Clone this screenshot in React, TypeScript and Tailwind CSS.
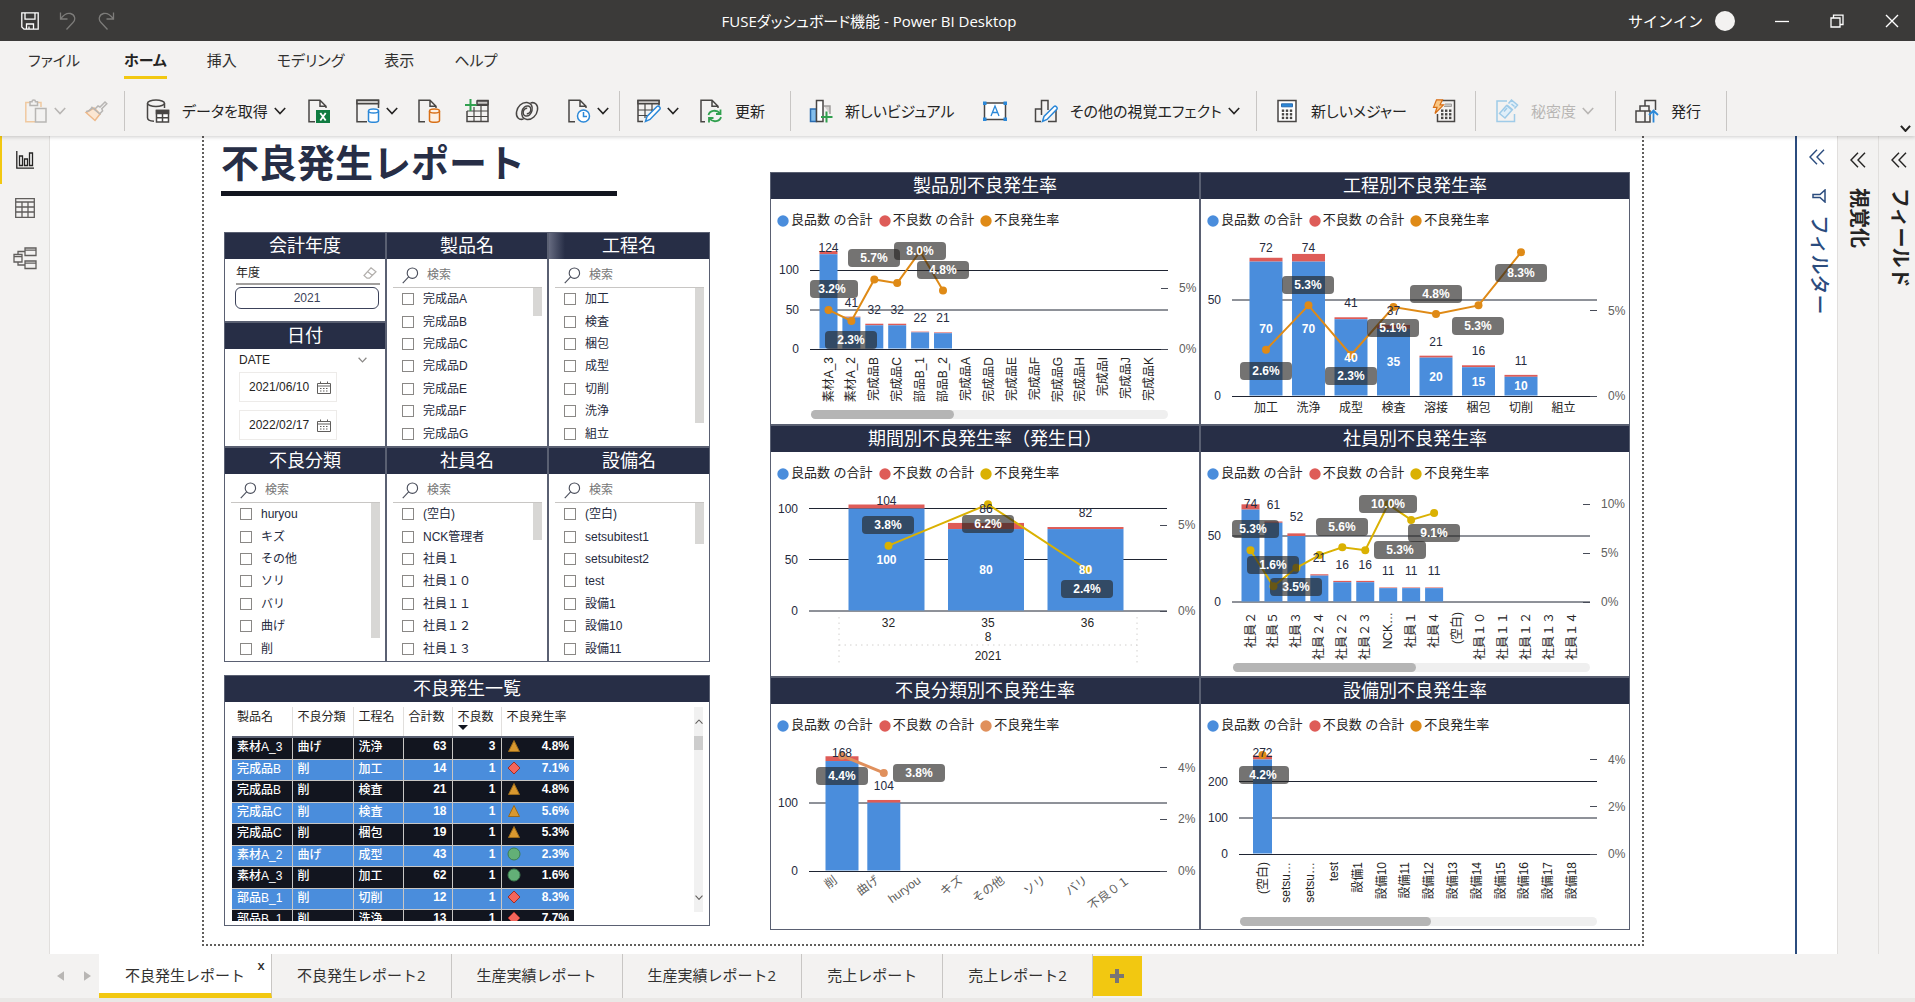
import React from 'react';

const BLUE = '#4a8ddc';
const RED = '#de5c58';
const ORANGE = '#df8a16';
const YELLOW = '#dab102';
const PEACH = '#e0905c';

/* ---------- icons ---------- */

const Icon = ({ children, className = 'h-6 w-6' }: any) => (
  <svg viewBox="0 0 24 24" fill="none" stroke="#484644" strokeWidth="1.5" className={`shrink-0 ${className}`} aria-hidden="true">
    {children}
  </svg>
);

const Chevron = ({ className = 'w-3 text-[#252423]' }: any) => (
  <svg viewBox="0 0 12 8" fill="none" stroke="currentColor" strokeWidth="1.6" className={`shrink-0 ${className}`} aria-hidden="true">
    <path d="M0.8 1l5.2 5.6L11.2 1" />
  </svg>
);

const DoubleChevron = ({ className }: any) => (
  <svg viewBox="0 0 16 16" fill="none" stroke="currentColor" strokeWidth="1.4" className={`h-4 w-4 shrink-0 ${className}`} aria-hidden="true">
    <path d="M8 0.8L1 8l7 7.2M15 0.8L8 8l7 7.2" />
  </svg>
);

const PasteIcon = () => (
  <Icon>
    <path d="M6 3.5H1.8v19.2H11M17 8V3.5h-4" stroke="#f0c9a0" />
    <path d="M6 2.8h2C8 .5 11.500.5 11.500 2.800h2V6.500H6z" stroke="#b8b6b4" />
    <path d="M11.500 9.500h10.500v13.500H11.500z" stroke="#b8b6b4" />
  </Icon>
);

const BrushIcon = () => (
  <Icon>
    <path d="M2 13.500l9 8 5-6.500-6-6z" stroke="#eeb98a" fill="#fbe6d2" />
    <path d="M2 12.500c3 0 4.500-1.500 6-4l8.500 7" stroke="#b8b6b4" />
    <path d="M11 10l3-3 2 1 5-5 1.800 1.800-5 5 .8 2-2.800 3" stroke="#b8b6b4" />
  </Icon>
);

const DatabaseIcon = () => (
  <Icon>
    <ellipse cx="10" cy="4.200" rx="8.500" ry="3.200" />
    <path d="M1.500 4.200v14.500c0 2 3 3.300 6.500 3.600M18.500 4.200V9" />
    <path d="M10.500 11.500h12v11.500h-12z" fill="#fff" />
    <path d="M10.500 11.500h12v3h-12z" fill="#484644" />
    <path d="M16.500 14v9M10.500 18.700h12" />
  </Icon>
);

const DocPage = ({ stroke = '#484644' }: any) => (
  <path d="M8 22.700H2V1.200h11l6 6V9M13 1.200v6h6" stroke={stroke} fill="none" />
);

const ExcelIcon = () => (
  <Icon>
    <DocPage />
    <path d="M9 11h14v13H9z" fill="#107c41" stroke="none" />
    <path d="M13.300 14l5.400 7.500M18.700 14l-5.400 7.500" stroke="#fff" strokeWidth="1.800" />
  </Icon>
);

const Cylinder = ({ color, fill }: any) => (
  <g stroke={color} fill={fill}>
    <path d="M12.500 12v9.500c0 1 2.200 1.800 5 1.800s5-.8 5-1.800V12" />
    <ellipse cx="17.500" cy="12" rx="5" ry="2" />
  </g>
);

const DatasetIcon = () => (
  <Icon>
    <path d="M11 22.700H1V1.200h21.500V9" />
    <path d="M1 1.200h21.500v3.600H1z" fill="#c8c6c4" />
    <Cylinder color="#2b88d8" fill="#fff" />
  </Icon>
);

const SqlIcon = () => (
  <Icon>
    <DocPage />
    <Cylinder color="#d86f16" fill="#fdf0e2" />
  </Icon>
);

const EnterDataIcon = () => (
  <Icon>
    <path d="M12 1.500h11v21H2V12" />
    <path d="M12 2h11v3.500H12z" fill="#c8c6c4" />
    <path d="M2 12h21M2 17.500h21M9 8v14.500M16 5v17.500M10 6.500h13" strokeWidth="1.200" />
    <path d="M5.500 0v12M0 6h11.500" stroke="#31a04f" strokeWidth="2" />
  </Icon>
);

const DataverseIcon = () => (
  <Icon>
    <path d="M8.500 20C4 21.500.8 18 1.500 13 2.200 7.500 7 3 12 3.500c4.200.4 6 4 5 8-.9 3.700-3.600 6-6.300 5.500-2.200-.4-3-2.700-2.300-5 .6-1.900 2.300-3 3.800-2.500" />
    <path d="M15.500 4C20 2.500 23.200 6 22.500 11 21.800 16.500 17 21 12 20.500c-4.200-.4-6-4-5-8 .9-3.700 3.600-6 6.300-5.500 2.200.4 3 2.700 2.300 5-.6 1.900-2.300 3-3.800 2.500" />
  </Icon>
);

const RecentIcon = () => (
  <Icon>
    <DocPage />
    <circle cx="16.500" cy="17" r="6" stroke="#2b88d8" fill="#fff" />
    <path d="M16.500 13v4.500h3.500" stroke="#2b88d8" />
  </Icon>
);

const Pencil = () => (
  <path d="M8.500 22.500l1.500-5L20 7.500c1.500-1.200 4 1 2.800 2.700L13 20.500z" stroke="#2b88d8" fill="#fff" />
);

const TransformIcon = () => (
  <Icon>
    <path d="M6 22.500H1v-21h21v5" />
    <path d="M1 1.500h21v3.300H1z" fill="#c8c6c4" />
    <path d="M1 11h15M1 16.500h10M8 5v14M15 5v7" strokeWidth="1.200" />
    <Pencil />
  </Icon>
);

const RefreshIcon = () => (
  <Icon>
    <path d="M6 22.700H2V1.200h11l6 6V9M13 1.200v6h6" />
    <path d="M9.500 16c1-4.500 8-6 11.500-1.500M21.500 10.500v4.500H17M22 18c-1 4.500-8 6-11.500 1.500M10 23.500V19h4.500" stroke="#31a04f" strokeWidth="1.800" />
  </Icon>
);

const NewVisualIcon = () => (
  <Icon>
    <path d="M1.500 10h6v12.500h-6z" fill="#83beec" stroke="#2b6cb0" />
    <path d="M15 7h6v8" stroke="#a19f9d" fill="#d2d0ce" />
    <path d="M7.500 1.500h6.500v21H7.500z" fill="#fff" />
    <path d="M17.500 12.500v11M12 18h11.500" stroke="#31a04f" strokeWidth="2" />
  </Icon>
);

const TextBoxIcon = () => (
  <Icon>
    <path d="M1.500 4h21v16.500h-21z" fill="#fff" />
    <path d="M8 17l4-10 4 10M9.500 13.500h5" stroke="#2b88d8" strokeWidth="1.300" />
    <path d="M0 2.500h3.500V6H0zM20.500 2.500H24V6h-3.500zM0 18.500h3.500V22H0zM20.500 18.500H24V22h-3.500z" fill="#2b88d8" stroke="none" />
  </Icon>
);

const MoreVisualsIcon = () => (
  <Icon>
    <path d="M7 22.500H1.500V10H7M7.500 16V1.500H14V11M19 10h3v12.500h-8" />
    <Pencil />
  </Icon>
);

const Dots = ({ x, y }: any) => (
  <g fill="#484644" stroke="none">
    {[0, 1, 2].map((r) =>
      [0, 1, 2].map((c) => <rect key={`${r}${c}`} x={x + c * 4} y={y + r * 3.6} width="2.4" height="2.4" />)
    )}
  </g>
);

const MeasureIcon = () => (
  <Icon>
    <path d="M3 1.500h18v21H3z" fill="#fff" />
    <path d="M6.500 4.800h11v3h-11z" fill="#2b88d8" stroke="#2b6cb0" strokeWidth="1" />
    <Dots x={6.800} y={10.500} />
  </Icon>
);

const QuickMeasureIcon = () => (
  <Icon>
    <path d="M10 1.500h12.500v21H5.500V15" />
    <path d="M13 5h6.500v2.500H12" fill="#c8c6c4" stroke="#a19f9d" strokeWidth="1" />
    <Dots x={9} y={10.500} />
    <path d="M4.500.8h6L8 5.800h3.500L3 14.500l2-6.200H1.500z" fill="#f9c784" stroke="#d86f16" strokeWidth="1.200" />
  </Icon>
);

const SensitivityIcon = () => (
  <Icon>
    <g stroke="#9fcbe8">
      <path d="M12 2H2v20.500h17.500V15" />
      <path d="M4.500 14.500l7-8 5.500 4.500-7 8zM9 12.500l3-3.500M13.500 4.500l3-3.500 6 5-3 3.500M16.500 5l3 2.500M12 6l6 5" fill="#e0eff9" />
    </g>
  </Icon>
);

const PublishIcon = () => (
  <Icon>
    <path d="M1 12h9v11H1zM5 12V7h9v5M10 7V1.500h10.500V10M10 12h5v11h-5M20.500 8v3" />
    <path d="M18.500 23.500V12M14 16l4.500-4.500L23 16" stroke="#2b88d8" strokeWidth="1.800" />
  </Icon>
);

const SearchIcon = () => (
  <svg viewBox="0 0 18 18" fill="none" stroke="#4b4f5c" strokeWidth="1.200" className="h-[17px] w-[17px] shrink-0" aria-hidden="true">
    <circle cx="11" cy="6.500" r="5.500" />
    <path d="M7 10.500L0.800 17" />
  </svg>
);

const CalendarIcon = () => (
  <svg viewBox="0 0 14 13" fill="none" stroke="#605e5c" strokeWidth="1" className="h-[13px] w-[14px] shrink-0" aria-hidden="true">
    <path d="M.5 2.500h13v10H.5zM.5 5h13M3.500.5v2.500M10.500.5v2.500" />
    <path d="M3 7.500h8.500M3 10h8.500" strokeDasharray="1.500 1.500" />
  </svg>
);

/* ---------- header ---------- */

const TitleBar = () => (
  <div className="relative flex h-[41px] items-center bg-[#3b3a39] text-white">
    <div className="flex flex-1 items-center gap-5 pl-[21px]">
      <button aria-label="保存">
        <svg viewBox="0 0 18 18" fill="none" stroke="#fff" strokeWidth="1.300" className="h-[18px] w-[18px]">
          <path d="M.8.8h16.400v16.400H3L.8 15zM4 .8v6.400h10V.8M5.500 17v-5h7v5M8 14.500V17" />
        </svg>
      </button>
      <button aria-label="元に戻す">
        <svg viewBox="0 0 18 18" fill="none" stroke="#7d7c7a" strokeWidth="1.300" className="h-[18px] w-[18px]">
          <path d="M1.500.5v6.500h7M1.500 7c3-4 6-6.500 10-5.500 4.500 1.200 5.500 6 2.500 9L7.500 17.500" />
        </svg>
      </button>
      <button aria-label="やり直し">
        <svg viewBox="0 0 18 18" fill="none" stroke="#7d7c7a" strokeWidth="1.300" className="h-[18px] w-[18px]">
          <path d="M16.500.5v6.500h-7M16.500 7c-3-4-6-6.500-10-5.500C2 2.700 1 7.500 4 10.500l6.500 7" />
        </svg>
      </button>
    </div>
    <h1 className="pr-[198px] text-[15px] leading-5 [font-feature-settings:'palt']">FUSEダッシュボード機能 - Power BI Desktop</h1>
    <div className="flex flex-1 items-center justify-end">
      <button className="text-[15px] leading-5">サインイン</button>
      <span className="ml-3 h-5 w-5 rounded-full bg-[#f3f2f1]" />
      <button aria-label="最小化" className="ml-10">
        <svg viewBox="0 0 14 14" stroke="#fff" strokeWidth="1.300" className="h-[14px] w-[14px]"><path d="M0 7.500h14" /></svg>
      </button>
      <button aria-label="元のサイズに戻す" className="ml-[41px]">
        <svg viewBox="0 0 14 14" fill="none" stroke="#fff" strokeWidth="1.300" className="h-[14px] w-[14px]">
          <path d="M1 4h9v9H1zM3.500 4V1.200H13V10.500h-3" />
        </svg>
      </button>
      <button aria-label="閉じる" className="mr-4 ml-[41px]">
        <svg viewBox="0 0 14 14" stroke="#fff" strokeWidth="1.400" className="h-[14px] w-[14px]"><path d="M1 1l12 12M13 1L1 13" /></svg>
      </button>
    </div>
  </div>
);

const menuItems = ['ファイル', 'ホーム', '挿入', 'モデリング', '表示', 'ヘルプ'];

const MenuTabs = () => (
  <nav className="flex h-[38px] items-stretch gap-10 pl-7 text-[15px] leading-5 text-[#323130] [font-feature-settings:'palt']">
    {menuItems.map((item) => (
      <button
        key={item}
        className={
          item === 'ホーム'
            ? 'ml-1 border-b-[3px] border-[#f2c811] pt-[3px] font-bold text-[#252423]'
            : 'border-b-[3px] border-transparent pt-[3px]'
        }
      >
        {item}
      </button>
    ))}
  </nav>
);

const Tool = ({ icon, label, name, menu, off, width }: any) => (
  <button aria-label={label ? undefined : name} className={`flex items-center ${width} ${off ? 'text-[#b8b6b4]' : 'text-[#252423]'}`}>
    {icon}
    {label && <span className="ml-3 whitespace-nowrap">{label}</span>}
    {menu && <Chevron className="ml-[6px] w-3" />}
  </button>
);

const Ribbon = () => (
  <div className="flex h-[57px] items-center pt-[6px] text-[15px] leading-5 [font-feature-settings:'palt']">
    <div className="flex h-10 border-r border-[#c8c6c4] pl-6">
      <Tool icon={<PasteIcon />} name="貼り付け" menu off width="w-[60px]" />
      <Tool icon={<BrushIcon />} name="書式のコピー" off width="w-10" />
    </div>
    <div className="flex h-10 border-r border-[#c8c6c4] pl-[21px]">
      <Tool icon={<DatabaseIcon />} label="データを取得" menu width="w-[161px]" />
      <Tool icon={<ExcelIcon />} name="Excel" width="w-[49px]" />
      <Tool icon={<DatasetIcon />} name="データセット" menu width="w-[61px]" />
      <Tool icon={<SqlIcon />} name="SQL Server" width="w-12" />
      <Tool icon={<EnterDataIcon />} name="データの入力" width="w-[50px]" />
      <Tool icon={<DataverseIcon />} name="Dataverse" width="w-[52px]" />
      <Tool icon={<RecentIcon />} name="最近のソース" menu width="w-[52px]" />
    </div>
    <div className="flex h-10 border-r border-[#c8c6c4] pl-[17px]">
      <Tool icon={<TransformIcon />} name="データの変換" menu width="w-[62px]" />
      <Tool icon={<RefreshIcon />} label="更新" width="w-[91px]" />
    </div>
    <div className="flex h-10 border-r border-[#c8c6c4] pl-[18px]">
      <Tool icon={<NewVisualIcon />} label="新しいビジュアル" width="w-[174px]" />
      <Tool icon={<TextBoxIcon />} name="テキスト ボックス" width="w-[51px]" />
      <Tool icon={<MoreVisualsIcon />} label="その他の視覚エフェクト" menu width="w-[222px]" />
    </div>
    <div className="flex h-10 border-r border-[#c8c6c4] pl-[18px]">
      <Tool icon={<MeasureIcon />} label="新しいメジャー" width="w-[157px]" />
      <Tool icon={<QuickMeasureIcon />} name="クイック メジャー" width="w-[43px]" />
    </div>
    <div className="flex h-10 border-r border-[#c8c6c4] pl-[19px]">
      <Tool icon={<SensitivityIcon />} label="秘密度" menu off width="w-[120px]" />
    </div>
    <div className="flex h-10 border-r border-[#c8c6c4] pl-[19px]">
      <Tool icon={<PublishIcon />} label="発行" width="w-[91px]" />
    </div>
    <button aria-label="リボンを折りたたむ" className="mr-1 mb-1 ml-auto self-end">
      <svg viewBox="0 0 12 8" fill="none" stroke="#252423" strokeWidth="2.200" className="w-[11px]"><path d="M1 1l5 5.500L11 1" /></svg>
    </button>
  </div>
);

/* ---------- side rails ---------- */

const LeftRail = () => (
  <div className="flex w-[50px] shrink-0 flex-col border-r border-[#e1dfdd] bg-[#f3f2f1]">
    <button aria-label="レポート" className="flex h-12 items-center border-l-2 border-[#f2c811] pl-[14px]">
      <svg viewBox="0 0 18 18" fill="none" stroke="#252423" strokeWidth="1.300" className="h-[18px] w-[18px]">
        <path d="M.8 0v17.200H18M3.500 5h3v9.500h-3zM8.500 8h3v6.500h-3zM13.500 2h3v12.500h-3z" />
      </svg>
    </button>
    <button aria-label="データ" className="flex h-12 items-center pl-[15px]">
      <svg viewBox="0 0 20 20" fill="none" stroke="#605e5c" strokeWidth="1.300" className="h-5 w-5">
        <path d="M.7.7h18.600v18.600H.7zM.7 4h18.600M.7 9h18.600M.7 14h18.600M7 4v15M13 4v15" />
      </svg>
    </button>
    <button aria-label="モデル" className="flex h-[52px] items-center pl-[13px]">
      <svg viewBox="0 0 24 24" fill="none" stroke="#605e5c" strokeWidth="1.300" className="h-6 w-6">
        <path d="M12 2h11v7.500H12zM12 4.200h11M1 8.500h8v7.500H1zM1 10.700h8M12 15h11v7.500H12zM12 17.200h11M5 8.500V5.500h7M5 16v3h7" />
      </svg>
    </button>
  </div>
);

const RightPanes = () => (
  <div className="flex shrink-0 text-[20px] leading-6">
    <div className="flex w-[42px] flex-col items-center border-l-2 border-[#2b4c7e] bg-white pt-[13px] text-[#2b4c7e]">
      <DoubleChevron className="" />
      <svg viewBox="0 0 14 14" fill="none" stroke="currentColor" strokeWidth="1.500" className="mt-6 ml-1 h-[14px] w-[14px]" aria-hidden="true">
        <path d="M13 1v12L8 8.500H1V5.500h7z" />
      </svg>
      <span className="mt-3 ml-1 font-medium [text-orientation:sideways] [writing-mode:vertical-rl]">フィルター</span>
    </div>
    <div className="flex w-[41px] flex-col items-center border-l border-[#e1dfdd] bg-[#f3f2f1] pt-4 text-[#252423]">
      <DoubleChevron className="" />
      <span className="mt-5 ml-[2px] font-bold [text-orientation:sideways] [writing-mode:vertical-rl]">視覚化</span>
    </div>
    <div className="flex w-[37px] flex-col items-center border-l border-[#e1dfdd] bg-[#f3f2f1] pt-4 text-[#252423]">
      <DoubleChevron className="ml-1" />
      <span className="mt-5 ml-[6px] font-bold [text-orientation:sideways] [writing-mode:vertical-rl]">フィールド</span>
    </div>
  </div>
);

/* ---------- slicers ---------- */

const PanelTitle = ({ children, className = '' }: any) => (
  <h2 className={`h-[26px] shrink-0 bg-[#272e46] text-center text-[18px] leading-[26px] text-white ${className}`}>{children}</h2>
);

const Slicer = ({ title, items, thumb, titleClass }: any) => (
  <section className="flex flex-col border border-[#5a6072]">
    <PanelTitle className={titleClass}>{title}</PanelTitle>
    <label className="mr-[5px] ml-1.5 flex h-[29px] shrink-0 items-center border-b border-[#c8c6c4] pt-1 pl-[9px]">
      <SearchIcon />
      <input type="text" placeholder="検索" aria-label={`${title} 検索`} className="ml-2 w-full min-w-0 text-[12px] leading-4 outline-none placeholder:text-[#767676]" />
    </label>
    <div className="mr-[5px] flex flex-1 pb-px">
      <ul className="flex flex-1 flex-col pl-[15px]">
        {items.map((item: string) => (
          <li key={item} className="flex flex-1 items-center">
            <label className="flex items-center text-[12px] leading-4 text-[#252a3d]">
              <input type="checkbox" className="mr-[9px] h-3 w-3 appearance-none border border-[#8a8886] bg-white" />
              {item}
            </label>
          </li>
        ))}
      </ul>
      <div className={`w-[9px] bg-[#d8d7d5] ${thumb}`} />
    </div>
  </section>
);

const DateField = ({ value, label }: any) => (
  <label className="flex h-[30px] w-[98px] items-center border border-[#edebe9] pl-[9px]">
    <input type="text" defaultValue={value} aria-label={label} className="w-[68px] text-[12px] leading-4 text-[#252423] outline-none" />
    <CalendarIcon />
  </label>
);

const PeriodSlicers = () => (
  <div className="flex flex-col">
    <section className="flex h-[90px] flex-col border border-[#5a6072]">
      <PanelTitle>会計年度</PanelTitle>
      <div className="mr-[5px] ml-[11px] flex h-[26px] items-center justify-between border-b-2 border-[#a19f9d] pt-[3px] pr-[3px] text-[12px] leading-4">
        <span>年度</span>
        <svg viewBox="0 0 14 12" fill="none" stroke="#b3b0ad" strokeWidth="1.200" className="h-3 w-[14px]" aria-hidden="true">
          <path d="M8 .8l5 4-6.500 6.400H4L1 8.500zM4.500 4.500l5 4" />
        </svg>
      </div>
      <button className="mt-[2px] mr-[6px] ml-[10px] h-[22px] rounded-md border border-[#3c425a] text-[12px] leading-4 text-[#3c425a]">2021</button>
    </section>
    <section className="flex flex-1 flex-col border border-[#5a6072]">
      <PanelTitle>日付</PanelTitle>
      <div className="px-[14px] pt-[3px]">
        <div className="flex h-4 items-center justify-between pr-1 text-[12px] leading-4">
          <span>DATE</span>
          <Chevron className="w-[9px] text-[#8a8886]" />
        </div>
        <div className="mt-1 flex flex-col gap-2">
          <DateField value="2021/06/10" label="開始日" />
          <DateField value="2022/02/17" label="終了日" />
        </div>
      </div>
    </section>
  </div>
);

/* ---------- table ---------- */

const rows = [
  ['素材A_3', '曲げ', '洗浄', 63, 3, 'mid', '4.8%'],
  ['完成品B', '削', '加工', 14, 1, 'high', '7.1%'],
  ['完成品B', '削', '検査', 21, 1, 'mid', '4.8%'],
  ['完成品C', '削', '検査', 18, 1, 'mid', '5.6%'],
  ['完成品C', '削', '梱包', 19, 1, 'mid', '5.3%'],
  ['素材A_2', '曲げ', '成型', 43, 1, 'low', '2.3%'],
  ['素材A_3', '削', '加工', 62, 1, 'low', '1.6%'],
  ['部品B_1', '削', '切削', 12, 1, 'high', '8.3%'],
  ['部品B_1', '削', '洗浄', 13, 1, 'high', '7.7%'],
];

const Kpi = ({ level }: any) => (
  <svg viewBox="0 0 14 14" className="h-[14px] w-[14px]" aria-hidden="true">
    {level === 'mid' && <path d="M7 1.500l5.500 11h-11z" fill="#d9982f" stroke="#9a6a1c" />}
    {level === 'high' && <path d="M7 1l6 6-6 6-6-6z" fill="#f4655b" stroke="#9d2f29" />}
    {level === 'low' && <circle cx="7" cy="7" r="6" fill="#63b077" stroke="#3d7d50" />}
  </svg>
);

const DefectTable = () => (
  <section className="mt-[13px] flex h-[251px] flex-col border border-[#5a6072]">
    <PanelTitle>不良発生一覧</PanelTitle>
    <div className="mr-1.5 ml-[7px] flex min-h-0 flex-1 justify-between pt-[5px] pb-1">
      <div className="overflow-hidden">
        <table className="w-[342px] table-fixed border-collapse text-[12px] leading-4">
          <thead>
            <tr className="h-[30px] border-b-2 border-[#5a6072] text-left align-top text-[#252423]">
              <th className="w-[60px] border-r border-[#e1dfdd] px-[5px] pt-[2px] font-normal">製品名</th>
              <th className="w-[61px] border-r border-[#e1dfdd] px-[5px] pt-[2px] font-normal">不良分類</th>
              <th className="w-[50px] border-r border-[#e1dfdd] px-[5px] pt-[2px] font-normal">工程名</th>
              <th className="w-[49px] border-r border-[#e1dfdd] px-[5px] pt-[2px] font-normal">合計数</th>
              <th className="w-[49px] border-r border-[#e1dfdd] px-[5px] pt-[2px] font-normal">
                不良数
                <svg viewBox="0 0 10 5" className="h-[5px] w-[10px]" aria-hidden="true"><path d="M0 0h10L5 5z" fill="#12151f" /></svg>
              </th>
              <th className="w-[73px] px-[5px] pt-[2px] font-normal">不良発生率</th>
            </tr>
          </thead>
          <tbody>
            {rows.map(([product, kind, step, total, bad, level, rate], i) => (
              <tr key={i} className="h-[21px] border-b border-[#c8c6c4] align-top font-medium text-white odd:h-[22px] odd:bg-[#12151f] even:bg-[#4a8ddc]">
                <td className="border-r border-[#c8c6c4] px-[5px] pt-px whitespace-nowrap">{product}</td>
                <td className="border-r border-[#c8c6c4] px-[5px] pt-px">{kind}</td>
                <td className="border-r border-[#c8c6c4] px-[5px] pt-px">{step}</td>
                <td className="border-r border-[#c8c6c4] px-[5px] text-right font-semibold">{total}</td>
                <td className="border-r border-[#c8c6c4] px-[5px] text-right font-semibold">{bad}</td>
                <td className="px-[5px]">
                  <div className="flex items-center justify-between font-semibold">
                    <Kpi level={level} />
                    {rate}
                  </div>
                </td>
              </tr>
            ))}
          </tbody>
        </table>
      </div>
      <div className="mb-[9px] flex w-[9px] flex-col items-center bg-[#f1f1f1]">
        <Chevron className="mt-3 w-2 rotate-180 text-[#605e5c]" />
        <span className="mt-3 h-[14px] w-full bg-[#cdcdcd]" />
        <Chevron className="mt-auto mb-3 w-2 text-[#605e5c]" />
      </div>
    </div>
  </section>
);

/* ---------- charts ---------- */

// bars: [label, total, good, rate?]   pills: [x, y, text]
const ComboChart = ({
  title, color, height, left, right, base, unit, first, step, barWidth, bars, ticks, soft = [],
  rateUnit, rateTicks, pills, totalGap = 14, totalTop = 17, showGood, lineShift = 0, lineWidth = 2,
  labels = 'vertical', labelY, scroll, children,
}: any) => {
  const cx = (i: number) => first + i * step;
  const y = (v: number) => base - v * unit;
  const ry = (v: number) => base - v * rateUnit;
  const gridY = (v: number) => (soft.includes(v) ? Math.round(y(v)) : Math.floor(y(v)) + 0.5);
  const points = bars.map((b: any, i: number) => [cx(i) + lineShift, b[3]]).filter((p: any) => p[1] !== undefined);

  return (
    <section className="border border-[#5a6072] bg-white">
      <PanelTitle>{title}</PanelTitle>
      <ul className="flex gap-[6px] pt-[11px] pb-px pl-[6px] text-[13px] leading-5 text-[#252423]">
        {[['良品数 の合計', BLUE], ['不良数 の合計', RED], ['不良発生率', color]].map(([name, c]) => (
          <li key={name} className="flex items-center gap-[2px]">
            <svg viewBox="0 0 12 12" className="mt-[2px] h-3 w-3" aria-hidden="true"><circle cx="6" cy="6" r="5.700" fill={c} /></svg>
            {name}
          </li>
        ))}
      </ul>
      <svg viewBox={`0 0 428 ${height}`} className="block w-full text-[12px]" role="img" aria-label={title}>
        {ticks.map((t: number) => (
          <g key={t}>
            <line x1={left} x2={right} y1={gridY(t)} y2={gridY(t)} stroke="#1f2432" />
            <text x={left - 11} y={y(t) + 4} textAnchor="end" fill="#252a3d">{t}</text>
          </g>
        ))}
        {bars.map(([, total, good]: any, i: number) =>
          total ? (
            <g key={i}>
              <rect x={cx(i) - barWidth / 2} y={y(total)} width={barWidth} height={(total - good) * unit} fill={RED} />
              <rect x={cx(i) - barWidth / 2} y={y(good)} width={barWidth} height={good * unit - 0.5} fill={BLUE} />
            </g>
          ) : null
        )}
        {rateTicks.map((t: number) => (
          <g key={t}>
            <line x1={right - 7} x2={right} y1={Math.floor(ry(t)) + 0.5} y2={Math.floor(ry(t)) + 0.5} stroke="#484c58" />
            <text x={right + 11} y={ry(t) + 4} fill="#605e5c">{`${t}%`}</text>
          </g>
        ))}
        <polyline points={points.map(([px, r]: any) => `${px},${ry(r)}`).join(' ')} fill="none" stroke={color} strokeWidth={lineWidth} />
        {points.map(([px, r]: any) => <circle key={px} cx={px} cy={ry(r)} r="4" fill={color} />)}
        {bars.map(([, total, good]: any, i: number) =>
          total ? (
            <g key={i} textAnchor="middle">
              <text x={cx(i)} y={Math.max(totalTop, y(total) - totalGap) + 4} fill="#252a3d">{total}</text>
              {showGood && <text x={cx(i)} y={y(good / 2) + 4} fill="#fff" fontWeight="600">{good}</text>}
            </g>
          ) : null
        )}
        {pills.map(([px, py, text]: any, i: number) => {
          const half = text.length > 4 ? 29 : 26;
          const x0 = Math.max(left, px - half);
          return (
            <g key={i}>
              <rect x={x0} y={py - 9} width={px + half - x0} height="18" rx="4" fill="#252423" opacity="0.640" />
              <text x={px} y={py + 4} textAnchor="middle" fill="#fff" fontWeight="600">{text}</text>
            </g>
          );
        })}
        {bars.map(([name]: any, i: number) => {
          if (labels === 'flat') return <text key={i} x={cx(i) + lineShift} y={labelY} textAnchor="middle" fill="#252423">{name}</text>;
          if (labels === 'slanted') return <text key={i} textAnchor="end" fill="#605e5c" transform={`translate(${cx(i) - 4} ${labelY}) rotate(-36)`}>{name}</text>;
          return <text key={i} textAnchor="end" fill="#252423" transform={`translate(${cx(i) + 4} ${labelY}) rotate(-90)`}>{name}</text>;
        })}
        {children}
        {scroll && (
          <g>
            <rect x={left + 1} y={scroll[0]} width={right - left - 1} height="9" rx="4.500" fill="#efefef" />
            <rect x={left + 1} y={scroll[0]} width={scroll[1]} height="9" rx="4.500" fill="#b5b5b5" />
          </g>
        )}
      </svg>
    </section>
  );
};

const Charts = () => (
  <div className="grid grid-cols-2 content-start">
    <ComboChart
      title="製品別不良発生率" color={ORANGE} height={193}
      left={39} right={397} base={118} unit={0.79} first={57.5} step={22.9} barWidth={18}
      ticks={[100, 50, 0]} soft={[50]} rateUnit={12.2} rateTicks={[5, 0]} labelY={126} scroll={[179, 143]}
      bars={[
        ['素材A_3', 124, 120, 3.2], ['素材A_2', 41, 40, 2.3], ['完成品B', 32, 30, 5.7], ['完成品C', 32, 30, 5.4],
        ['部品B_1', 22, 21, 8.0], ['部品B_2', 21, 20, 4.8], ['完成品A'], ['完成品D'], ['完成品E'], ['完成品F'],
        ['完成品G'], ['完成品H'], ['完成品I'], ['完成品J'], ['完成品K'],
      ]}
      pills={[[61, 58, '3.2%'], [80, 109, '2.3%'], [103, 27, '5.7%'], [149, 20, '8.0%'], [172, 39, '4.8%']]}
    />
    <ComboChart
      title="工程別不良発生率" color={ORANGE} height={193}
      left={31} right={396} base={165} unit={1.92} first={65} step={42.5} barWidth={33}
      ticks={[50, 0]} soft={[50]} rateUnit={17.1} rateTicks={[5, 0]} labels="flat" labelY={181} showGood
      bars={[
        ['加工', 72, 70, 2.7], ['洗浄', 74, 70, 5.3], ['成型', 41, 40, 2.4], ['検査', 37, 35, 5.2],
        ['溶接', 21, 20, 4.8], ['梱包', 16, 15, 5.3], ['切削', 11, 10, 8.4], ['組立'],
      ]}
      pills={[
        [65, 140, '2.6%'], [107, 54, '5.3%'], [150, 145, '2.3%'], [192, 97, '5.1%'],
        [235, 63, '4.8%'], [277, 95, '5.3%'], [320, 42, '8.3%'],
      ]}
    />
    <ComboChart
      title="期間別不良発生率（発生日）" color={YELLOW} height={192}
      left={38} right={396} base={127} unit={1.024} first={115.5} step={99.5} barWidth={76}
      ticks={[100, 50, 0]} soft={[0]} rateUnit={17.2} rateTicks={[5, 0]} labels="flat" labelY={143} showGood lineShift={2}
      bars={[['32', 104, 100, 3.8], ['35', 86, 80, 6.2], ['36', 82, 80, 2.4]]}
      pills={[[117, 41, '3.8%'], [217, 40, '6.2%'], [316, 105, '2.4%']]}
    >
      <g textAnchor="middle" fill="#252423">
        <text x="217" y="157">8</text>
        <text x="217" y="176">2021</text>
      </g>
      <path d="M68 133v48M366 133v48M68 161h298" stroke="#d2d0ce" strokeDasharray="1.500 4" />
    </ComboChart>
    <ComboChart
      title="社員別不良発生率" color={YELLOW} height={192}
      left={31} right={389} base={118} unit={1.32} first={49.5} step={22.95} barWidth={18}
      ticks={[50, 0]} soft={[50, 0]} rateUnit={9.77} rateTicks={[10, 5, 0]} totalGap={16} totalTop={20} labelY={128} scroll={[179, 183]}
      bars={[
        ['社員２', 74, 70, 5.3], ['社員５', 61, 60, 1.6], ['社員３', 52, 50, 3.5], ['社員２４', 21, 20, 4.8],
        ['社員２２', 16, 15, 5.6], ['社員２３', 16, 15, 5.3], ['NCK…', 11, 10.5, 10], ['社員１', 11, 10.5, 8.4],
        ['社員４', 11, 10.5, 9.1], ['(空白)'], ['社員１０'], ['社員１１'], ['社員１２'], ['社員１３'], ['社員１４'],
      ]}
      pills={[
        [52, 45, '5.3%'], [72, 81, '1.6%'], [95, 103, '3.5%'], [141, 43, '5.6%'],
        [187, 20, '10.0%'], [199, 66, '5.3%'], [233, 49, '9.1%'],
      ]}
    />
    <ComboChart
      title="不良分類別不良発生率" color={PEACH} height={193}
      left={38} right={396} base={135} unit={0.683} first={71} step={41.8} barWidth={33}
      ticks={[100, 0]} soft={[100]} rateUnit={25.8} rateTicks={[4, 2, 0]} lineWidth={3} labels="slanted" labelY={146}
      bars={[['削', 168, 161, 4.47], ['曲げ', 104, 100, 3.8], ['huryou'], ['キズ'], ['その他'], ['ソリ'], ['バリ'], ['不良０１']]}
      pills={[[71, 40, '4.4%'], [148, 37, '3.8%']]}
    />
    <ComboChart
      title="設備別不良発生率" color={ORANGE} height={193}
      left={38} right={396} base={118} unit={0.362} first={61.500} step={23.8} barWidth={19}
      ticks={[200, 100, 0]} soft={[100]} rateUnit={23.6} rateTicks={[4, 2, 0]} labelY={126} scroll={[181, 191]}
      bars={[
        ['(空白)', 272, 261, 4.2], ['setsu…'], ['setsu…'], ['test'], ['設備1'], ['設備10'], ['設備11'], ['設備12'],
        ['設備13'], ['設備14'], ['設備15'], ['設備16'], ['設備17'], ['設備18'],
      ]}
      pills={[[62, 39, '4.2%']]}
    />
  </div>
);

/* ---------- page tabs ---------- */

const pages = ['不良発生レポート2', '生産実績レポート', '生産実績レポート2', '売上レポート', '売上レポート2'];

const PageTabs = () => (
  <footer className="border-b-4 border-[#eae8e6] bg-[#f3f2f1]">
    <div className="flex h-11 items-stretch text-[15px] leading-5 text-[#323130]">
      <div className="flex w-[99px] items-center justify-end gap-5 pr-2">
        <button aria-label="前のページ"><svg viewBox="0 0 6 8" className="h-[10px] w-[7px]"><path d="M6 0v8L0 4z" fill="#b8b6b4" /></svg></button>
        <button aria-label="次のページ"><svg viewBox="0 0 6 8" className="h-[10px] w-[7px]"><path d="M0 0v8l6-4z" fill="#b8b6b4" /></svg></button>
      </div>
      <div className="flex border-r border-b-[5px] border-r-[#c8c6c4] border-b-[#f2c811] bg-white pl-[26px]">
        <button className="pt-[3px]">不良発生レポート</button>
        <button aria-label="ページの削除" className="w-[26px] self-start pt-px pl-1.5 text-[13px] font-semibold">x</button>
      </div>
      {pages.map((p) => (
        <button key={p} className="border-r border-[#c8c6c4] px-[25px] pb-[2px]">{p}</button>
      ))}
      <button aria-label="新しいページ" className="flex h-10 w-[49px] items-center justify-center self-center bg-[#f2c811]">
        <svg viewBox="0 0 14 14" className="h-[14px] w-[14px]"><path d="M7 0v14M0 7h14" stroke="#7a7574" strokeWidth="4" /></svg>
      </button>
    </div>
  </footer>
);

const App = () => (
  <div className="flex min-h-screen flex-col bg-white font-['Open_Sans','Noto_Sans_CJK_JP',sans-serif] text-[#252423]">
    <header className="relative bg-[#f3f2f1] shadow-[0_1px_4px_rgba(0,0,0,0.2)]">
      <TitleBar />
      <MenuTabs />
      <Ribbon />
    </header>
    <div className="flex flex-1">
      <LeftRail />
      <main className="min-w-0 flex-1 pr-[151px] pb-2 pl-[152px] font-['Liberation_Sans','Noto_Sans_CJK_JP',sans-serif]">
        <div className="grid grid-cols-[489fr_860fr] gap-[60px] border-2 border-t-0 border-dotted border-[#605e5c] pr-3 pb-[14px] pl-[17px]">
          <div>
            <h1 className="h-[55px] text-[38px] leading-[56px] font-bold whitespace-nowrap text-[#272e46]">不良発生レポート</h1>
            <div className="mr-[93px] h-[5px] bg-[#12151f]" />
            <div className="mt-9 ml-[3px]">
              <div className="grid auto-rows-[215px] grid-cols-3">
                <PeriodSlicers />
                <Slicer title="製品名" thumb="h-7" items={['完成品A', '完成品B', '完成品C', '完成品D', '完成品E', '完成品F', '完成品G']} />
                <Slicer
                  title="工程名"
                  thumb="h-[135px]"
                  titleClass="bg-linear-to-r from-[#666b80] to-[#272e46] to-10%"
                  items={['加工', '検査', '梱包', '成型', '切削', '洗浄', '組立']}
                />
                <Slicer title="不良分類" thumb="h-[135px]" items={['huryou', 'キズ', 'その他', 'ソリ', 'バリ', '曲げ', '削']} />
                <Slicer title="社員名" thumb="h-[37px]" items={['(空白)', 'NCK管理者', '社員１', '社員１０', '社員１１', '社員１２', '社員１３']} />
                <Slicer title="設備名" thumb="h-[41px]" items={['(空白)', 'setsubitest1', 'setsubitest2', 'test', '設備1', '設備10', '設備11']} />
              </div>
              <DefectTable />
            </div>
          </div>
          <div className="pt-9">
            <Charts />
          </div>
        </div>
      </main>
      <RightPanes />
    </div>
    <PageTabs />
  </div>
);

export default App;
